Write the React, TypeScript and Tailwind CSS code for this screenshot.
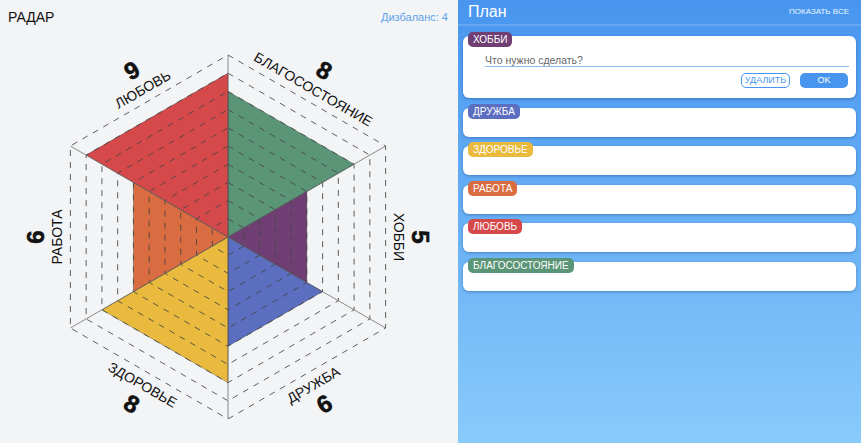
import React from 'react';

const CX = 228;
const CY = 237;
const R = 182;

const sectors = [
  { name: 'БЛАГОСОСТОЯНИЕ', value: 8, color: '#5b9577' },
  { name: 'ХОББИ', value: 5, color: '#6f3f74' },
  { name: 'ДРУЖБА', value: 6, color: '#5b6ebf' },
  { name: 'ЗДОРОВЬЕ', value: 8, color: '#e9ba3d' },
  { name: 'РАБОТА', value: 6, color: '#d96d41' },
  { name: 'ЛЮБОВЬ', value: 9, color: '#d6494b' },
];

const plan = ['ХОББИ', 'ДРУЖБА', 'ЗДОРОВЬЕ', 'РАБОТА', 'ЛЮБОВЬ', 'БЛАГОСОСТОЯНИЕ'];

function pt(deg: number, r: number): [number, number] {
  const a = (deg * Math.PI) / 180;
  return [CX + r * Math.cos(a), CY + r * Math.sin(a)];
}

function hexPoints(r: number) {
  return [0, 1, 2, 3, 4, 5]
    .map((k) => pt(-90 + 60 * k, r).map((n) => n.toFixed(2)).join(','))
    .join(' ');
}

function Radar() {
  const apothem = R * Math.cos(Math.PI / 6);
  return (
    <svg width={458} height={409} viewBox="0 34 458 409" className="block">
      {sectors.map((s, i) => {
        const r = (R * s.value) / 10;
        const a = pt(-90 + 60 * i, r);
        const b = pt(-30 + 60 * i, r);
        return (
          <polygon
            key={s.name}
            points={`${CX},${CY} ${a[0]},${a[1]} ${b[0]},${b[1]}`}
            fill={s.color}
            stroke="rgba(0,0,0,0.35)"
            strokeWidth={0.8}
          />
        );
      })}
      {[1, 2, 3, 4, 5, 6, 7, 8, 9, 10].map((l) => (
        <polygon
          key={l}
          points={hexPoints((R * l) / 10)}
          fill="none"
          stroke="#444"
          strokeOpacity={0.85}
          strokeWidth={1}
          strokeDasharray="6 6"
        />
      ))}
      {[0, 1, 2, 3, 4, 5].map((k) => {
        const [x, y] = pt(-90 + 60 * k, R);
        return <line key={k} x1={CX} y1={CY} x2={x} y2={y} stroke="#666" strokeOpacity={0.75} strokeWidth={1} />;
      })}
      {sectors.map((s, i) => {
        const m = -60 + 60 * i;
        let rot = m + 90;
        if (rot > 180) rot -= 360;
        if (rot > 90) rot -= 180;
        if (rot < -90) rot += 180;
        const [lx, ly] = pt(m, apothem + 13);
        const [nx, ny] = pt(m, apothem + 35);
        return (
          <g key={s.name} fill="#111" style={{ fontFamily: "'Liberation Sans', Arial, sans-serif" }}>
            <text
              x={lx}
              y={ly}
              fontSize={14}
              textAnchor="middle"
              dominantBaseline="central"
              transform={`rotate(${rot} ${lx} ${ly})`}
            >
              {s.name}
            </text>
            <text
              x={nx}
              y={ny}
              fontSize={24}
              fontWeight={700}
              stroke="#111"
              strokeWidth={0.6}
              textAnchor="middle"
              dominantBaseline="central"
              transform={`rotate(${rot} ${nx} ${ny})`}
            >
              {s.value}
            </text>
          </g>
        );
      })}
    </svg>
  );
}

export default function App() {
  return (
    <div className="flex w-[861px] h-[443px] overflow-hidden font-['Liberation_Sans',Arial,sans-serif]">
      <div className="w-[458px] h-full bg-[#f3f4f6] flex flex-col">
        <div className="h-[34px] flex items-center justify-between pl-2 pr-[10px]">
          <span className="text-[14px] text-[#111]">РАДАР</span>
          <span className="text-[11px] text-[#5ba3e8]">Дизбаланс: 4</span>
        </div>
        <Radar />
      </div>
      <div className="flex-1 h-full bg-gradient-to-b from-[#4895ef] to-[#88cbfb] flex flex-col">
        <div className="h-[26px] flex items-center justify-between pl-[10px] pr-[12px] border-b-2 border-white/15">
          <span className="text-[16px] text-white">План</span>
          <span className="text-[8px] text-white/90">ПОКАЗАТЬ ВСЕ</span>
        </div>
        <div className="flex flex-col gap-[9.5px] px-[5px] pt-[10px]">
          {plan.map((name, i) => {
            const s = sectors.find((x) => x.name === name)!;
            return (
              <div
                key={name}
                className={`relative bg-white rounded-[6px] shadow-[0_1px_3px_rgba(0,40,100,0.35)] ${i === 0 ? 'h-[62px]' : 'h-[29px]'}`}
              >
                <span
                  className="absolute -top-[4px] left-[5px] h-[15px] px-[5px] rounded-[5px] text-[10px] leading-[15px] text-white"
                  style={{ backgroundColor: s.color }}
                >
                  {name}
                </span>
                {i === 0 && (
                  <div className="flex flex-col pl-[22px] pr-[8px] pt-[19px]">
                    <div className="h-[12px] border-b border-[#8cb9f0] text-[10.5px] leading-[10px] text-[#666] mr-[-1px]">
                      Что нужно сделать?
                    </div>
                    <div className="flex justify-end gap-[10px] mt-[6px]">
                      <button className="w-[49px] h-[15px] rounded-[5px] border border-[#4895ef] text-[9px] leading-[13px] text-[#4895ef]">
                        УДАЛИТЬ
                      </button>
                      <button className="w-[48px] h-[15px] rounded-[5px] bg-[#4895ef] text-[9px] leading-[15px] text-white">
                        OK
                      </button>
                    </div>
                  </div>
                )}
              </div>
            );
          })}
        </div>
      </div>
    </div>
  );
}
